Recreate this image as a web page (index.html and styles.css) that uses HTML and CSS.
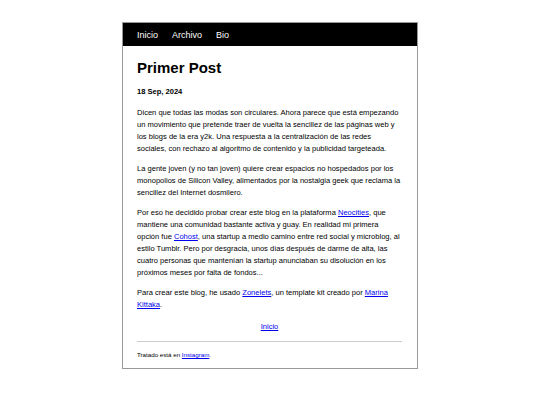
FILE: index.html
```html
<!DOCTYPE html>
<html lang="es">
<head>
<meta charset="utf-8">
<title>Primer Post</title>
<link rel="stylesheet" href="styles.css">
</head>
<body>
<div class="page">
  <nav class="nav">
    <a href="#">Inicio</a>
    <a href="#">Archivo</a>
    <a href="#">Bio</a>
  </nav>
  <main class="content">
    <h1 class="title">Primer Post</h1>
    <p class="date">18 Sep, 2024</p>
    <p>Dicen que todas las modas son circulares. Ahora parece que está empezando un movimiento que pretende traer de vuelta la sencillez de las páginas web y los blogs de la era y2k. Una respuesta a la centralización de las redes sociales, con rechazo al algoritmo de contenido y la publicidad targeteada.</p>
    <p>La gente joven (y no tan joven) quiere crear espacios no hospedados por los monopolios de Silicon Valley, alimentados por la nostalgia geek que reclama la sencillez del Internet dosmilero.</p>
    <p>Por eso he decidido probar crear este blog en la plataforma <a href="#">Neocities</a>, que mantiene una comunidad bastante activa y guay. En realidad mi primera opción fue <a href="#">Cohost</a>, una startup a medio camino entre red social y microblog, al estilo Tumblr. Pero por desgracia, unos días después de darme de alta, las cuatro personas que mantenían la startup anunciaban su disolución en los próximos meses por falta de fondos...</p>
    <p>Para crear este blog, he usado <a href="#">Zonelets</a>, un template kit creado por <a href="#">Marina Kittaka</a>.</p>
    <p class="home"><a href="#">Inicio</a></p>
    <hr class="rule">
    <footer class="foot">Tratado está en <a href="#">Instagram</a>.</footer>
  </main>
</div>
</body>
</html>
```
FILE: styles.css
```css
html, body {
  margin: 0;
  padding: 0;
  background: #fff;
}
body {
  font-family: "Liberation Sans", Arial, sans-serif;
  color: #000;
}
.page {
  width: 294px;
  margin: 22px auto 0;
  border: 1px solid #999;
}
.nav {
  background: #000;
  height: 23px;
  display: flex;
  align-items: center;
  gap: 14px;
  padding: 0 14px;
  font-size: 9px;
}
.nav a {
  color: #fff;
  text-decoration: none;
}
.content {
  padding: 12px 15px 8px 14px;
  font-size: 7.55px;
  line-height: 12px;
}
.content p {
  margin: 8px 0;
}
.content a {
  color: #0000ee;
}
.title {
  font-size: 15px;
  margin: 0 0 8px;
  line-height: 20px;
}
.content .date {
  font-weight: bold;
  margin: 0 0 9px;
}
.content .home {
  text-align: center;
  margin-top: 10px;
}
.rule {
  border: 0;
  border-top: 1px solid #ccc;
  margin: 8px 0;
}
.foot {
  font-size: 6.2px;
  line-height: 10px;
}
```
